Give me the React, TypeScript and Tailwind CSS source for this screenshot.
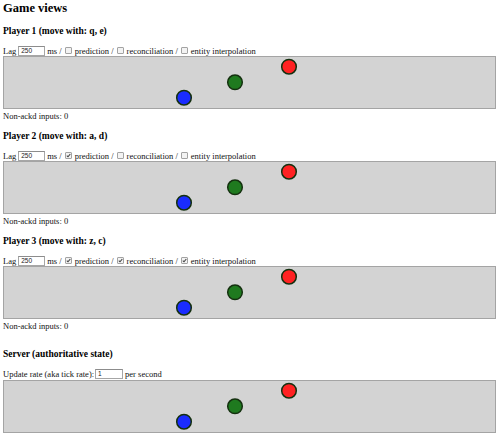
import React from 'react';

type Opts = { prediction: boolean; reconciliation: boolean; interpolation: boolean };

const players: { title: string; opts: Opts }[] = [
  { title: 'Player 1 (move with: q, e)', opts: { prediction: false, reconciliation: false, interpolation: false } },
  { title: 'Player 2 (move with: a, d)', opts: { prediction: true, reconciliation: false, interpolation: false } },
  { title: 'Player 3 (move with: z, c)', opts: { prediction: true, reconciliation: true, interpolation: true } },
];

const CheckBox: React.FC<{ checked: boolean }> = ({ checked }) => (
  <span className="inline-flex items-center justify-center w-[7px] h-[7px] mx-[3px] border border-[#a3a3a3] bg-[#f3f3f3] rounded-[1px] align-[-0.5px]">
    {checked && (
      <svg width="5" height="5" viewBox="0 0 5 5">
        <path d="M0.8 2.6 L2 3.8 L4.3 1" fill="none" stroke="#444" strokeWidth="1.1" />
      </svg>
    )}
  </span>
);

const TextBox: React.FC<{ value: string; width: string; margin: string }> = ({ value, width, margin }) => (
  <span
    className={`inline-block ${width} ${margin} h-[10px] border border-[#a6a6a6] border-t-[#8c8c8c] bg-white px-[2px] text-[6.5px] leading-[8px] text-[#222] align-[-2px]`}
    style={{ fontFamily: '"Liberation Sans", sans-serif' }}
  >
    {value}
  </span>
);

// the game "canvas": grey box with three entities
const Board: React.FC = () => (
  <div className="w-[493px] h-[53px] border border-[#a4a4a4] bg-[#d3d3d3]">
    <svg width="491" height="51" className="block">
      <circle cx="180" cy="40.7" r="7.3" fill="#1a2cff" stroke="#14300f" strokeWidth="1.5" />
      <circle cx="231" cy="25.3" r="7.3" fill="#1f7a1f" stroke="#14300f" strokeWidth="1.5" />
      <circle cx="285" cy="9.7" r="7.3" fill="#ff2222" stroke="#14300f" strokeWidth="1.5" />
    </svg>
  </div>
);

const App: React.FC = () => {
  return (
    <div
      className="w-[500px] h-[439px] overflow-hidden bg-white text-[#111] px-[3px] text-[8.5px] leading-[10px]"
      style={{ fontFamily: '"Liberation Serif", "Times New Roman", serif' }}
    >
      <h2 className="text-[12.5px] leading-[14px] font-bold pt-px text-black">Game views</h2>

      {players.map((p, i) => (
        <div key={i} className="mt-[11px]">
          <h3 className="text-[9.5px] leading-[11px] font-bold text-black">{p.title}</h3>
          <div className="mt-[8px] h-[11px] flex items-center whitespace-nowrap">
            <span>Lag</span>
            <TextBox value="250" width="w-[27px]" margin="mx-[2px]" />
            <span>ms /</span>
            <CheckBox checked={p.opts.prediction} />
            <span>prediction /</span>
            <CheckBox checked={p.opts.reconciliation} />
            <span>reconciliation /</span>
            <CheckBox checked={p.opts.interpolation} />
            <span>entity interpolation</span>
          </div>
          <Board />
          <div className="h-[11px] pt-[2px]">Non-ackd inputs: 0</div>
        </div>
      ))}

      <div className="mt-[19px]">
        <h3 className="text-[9.5px] leading-[11px] font-bold text-black">Server (authoritative state)</h3>
        <div className="mt-[8px] h-[12px] flex items-center whitespace-nowrap">
          <span>Update rate (aka tick rate):</span>
          <TextBox value="1" width="w-[28px]" margin="ml-[1px] mr-[2px]" />
          <span>per second</span>
        </div>
        <Board />
      </div>
    </div>
  );
};

export default App;
